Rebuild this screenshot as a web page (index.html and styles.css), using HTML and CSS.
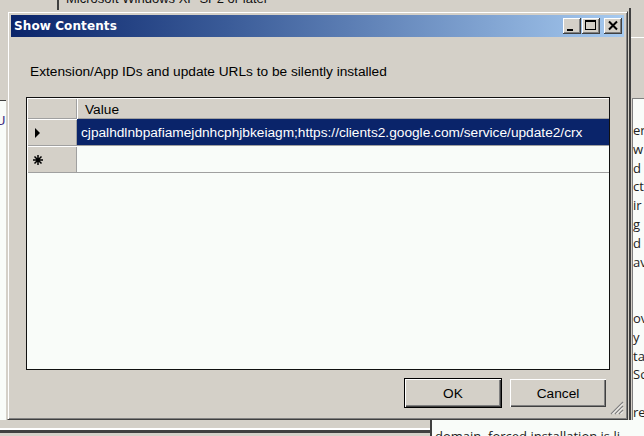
FILE: index.html
```html
<!DOCTYPE html>
<html>
<head>
<meta charset="utf-8">
<link rel="stylesheet" href="styles.css">
</head>
<body>
<div class="desktop">
  <div class="bg-top">
    <span class="bg-top-line"></span>
    <span class="bg-top-text">Microsoft Windows XP SP2 or later</span>
  </div>
  <div class="bg-left"><span class="bg-left-text">U</span></div>
  <div class="bg-right">
    <div class="bg-right-panel">
      <div class="ln">er</div>
      <div class="ln">w</div>
      <div class="ln">d</div>
      <div class="ln">ct</div>
      <div class="ln">ir</div>
      <div class="ln">g</div>
      <div class="ln">d</div>
      <div class="ln">av</div>
      <div class="ln"></div>
      <div class="ln"></div>
      <div class="ln">ov</div>
      <div class="ln">y</div>
      <div class="ln">ta</div>
      <div class="ln">Sc</div>
      <div class="ln"></div>
      <div class="ln">re</div>
    </div>
  </div>
  <div class="bg-bottom">
    <div class="bg-bottom-bar"></div>
    <div class="bg-bottom-panel">domain, forced installation is li</div>
  </div>

  <div class="dialog">
    <div class="titlebar">
      <span class="title">Show Contents</span>
      <div class="caption-btns">
        <span class="cap-btn"><svg width="18" height="16" viewBox="0 0 18 16"><rect x="4" y="11" width="6" height="2" fill="#000"/></svg></span>
        <span class="cap-btn"><svg width="18" height="16" viewBox="0 0 18 16"><rect x="3.5" y="2.5" width="10" height="9" fill="none" stroke="#000" stroke-width="1"/><rect x="3" y="2" width="11" height="2" fill="#000"/></svg></span>
        <span class="cap-btn cap-close"><svg width="18" height="16" viewBox="0 0 18 16"><path d="M5 3.5 L13 11.5 M13 3.5 L5 11.5" stroke="#000" stroke-width="2" fill="none"/></svg></span>
      </div>
    </div>
    <div class="body">
      <p class="label">Extension/App IDs and update URLs to be silently installed</p>
      <div class="grid">
        <div class="grid-row row-header">
          <div class="rowhead"></div>
          <div class="cell">Value</div>
        </div>
        <div class="grid-row row-selected">
          <div class="rowhead"><svg width="10" height="12" viewBox="0 0 10 12"><path d="M3 1 L8 6 L3 11 Z" fill="#000"/></svg></div>
          <div class="cell">cjpalhdlnbpafiamejdnhcphjbkeiagm;https://clients2.google.com/service/update2/crx</div>
        </div>
        <div class="grid-row row-new">
          <div class="rowhead"><svg width="12" height="12" viewBox="0 0 12 12"><path d="M6 1 V11 M1 6 H11 M2.5 2.5 L9.5 9.5 M9.5 2.5 L2.5 9.5" stroke="#000" stroke-width="1.5" fill="none"/></svg></div>
          <div class="cell"></div>
        </div>
      </div>
      <div class="buttons">
        <span class="btn btn-default"><span class="btn-face">OK</span></span>
        <span class="btn"><span class="btn-face">Cancel</span></span>
      </div>
    </div>
    <svg class="grip" width="14" height="14" viewBox="0 0 14 14">
      <path d="M13 1 L1 13 M13 5 L5 13 M13 9 L9 13" stroke="#808080" stroke-width="1.2" fill="none"/>
      <path d="M13 2.5 L2.5 13 M13 6.5 L6.5 13 M13 10.5 L10.5 13" stroke="#fff" stroke-width="1" fill="none"/>
    </svg>
  </div>
</div>
</body>
</html>
```

FILE: styles.css
```css
* { box-sizing: border-box; }
html, body { margin: 0; padding: 0; }
body {
  width: 644px;
  height: 436px;
  overflow: hidden;
  background: #d4d0c8;
  font-family: "Liberation Sans", Arial, sans-serif;
  font-size: 13.7px;
  color: #000;
}
.desktop {
  position: relative;
  width: 644px;
  height: 436px;
  overflow: hidden;
}

/* background window pieces */
.bg-top {
  position: absolute;
  left: 0;
  top: 0;
  width: 644px;
  height: 11px;
  overflow: hidden;
}
.bg-top-line {
  position: absolute;
  left: 57px;
  top: 0;
  width: 2px;
  height: 10px;
  background: #404040;
}
.bg-top-text {
  position: absolute;
  left: 66px;
  top: -9px;
  font-size: 13px;
  color: #111;
}
.bg-left {
  position: absolute;
  left: 0;
  top: 100px;
  width: 6px;
  height: 320px;
  background: #f9fcf9;
  border-top: 1px solid #404040;
  overflow: hidden;
}
.bg-left-text {
  position: absolute;
  left: -4px;
  top: 12px;
  font-size: 13px;
  color: #3a2a80;
}
.bg-right {
  position: absolute;
  left: 629px;
  top: 8px;
  width: 15px;
  height: 428px;
  border-left: 2px solid #404040;
  background: #d4d0c8;
  overflow: hidden;
}
.bg-right::before {
  content: "";
  display: block;
  height: 1px;
  margin-top: 29px;
  background: #fff;
}
.bg-right-panel {
  margin-top: 60px;
  margin-left: 1px;
  height: 400px;
  background: #f9fcf9;
  border-top: 1px solid #808080;
  border-left: 1px solid #808080;
  padding-top: 22px;
  font-family: "Open Sans", "Liberation Sans", sans-serif;
  font-size: 13px;
  color: #222;
}
.ln {
  height: 18.8px;
  line-height: 18.8px;
  white-space: nowrap;
}
.bg-bottom {
  position: absolute;
  left: 0;
  top: 420px;
  width: 644px;
  height: 16px;
  display: flex;
}
.bg-bottom-bar {
  width: 430px;
  border-bottom: 3px solid #404040;
  box-shadow: inset 0 -2px #fff;
  height: 13px;
}
.bg-bottom-panel {
  flex: 1;
  background: #f9fcf9;
  border-left: 2px solid #404040;
  padding-left: 3px;
  font-family: "Open Sans", "Liberation Sans", sans-serif;
  font-size: 13px;
  line-height: 14px;
  padding-top: 9px;
  white-space: nowrap;
  color: #222;
}

/* dialog */
.dialog {
  position: absolute;
  left: 7px;
  top: 11px;
  width: 621px;
  height: 409px;
  background: #d4d0c8;
  border: 1px solid;
  border-color: #d4d0c8 #404040 #404040 #d4d0c8;
  box-shadow: inset 1px 1px #fff, inset -1px -1px #808080;
  padding: 3px;
  display: flex;
  flex-direction: column;
}
.titlebar {
  height: 22px;
  background: linear-gradient(to right, #0a246a 0%, #3a5b98 35%, #a6caf0 100%);
  display: flex;
  align-items: center;
  justify-content: space-between;
  padding-left: 3px;
  padding-right: 2px;
}
.title {
  font-family: "DejaVu Sans", Verdana, sans-serif;
  font-weight: bold;
  font-size: 12px;
  color: #fff;
  letter-spacing: 0.1px;
}
.caption-btns {
  display: flex;
  align-items: center;
}
.cap-btn {
  width: 18px;
  height: 16px;
  background: #d4d0c8;
  box-shadow: inset -1px -1px #404040, inset 1px 1px #fff, inset -2px -2px #808080;
  display: flex;
}
.cap-btn + .cap-btn { margin-left: 1px; }
.cap-btn.cap-close { margin-left: 4px; }

.body {
  flex: 1;
  display: flex;
  flex-direction: column;
  padding: 0 14px 0 15px;
}
.label {
  margin: 27px 0 0 4px;
  line-height: 16px;
  white-space: nowrap;
}
.grid {
  margin-top: 17px;
  height: 273px;
  border: 1px solid #111;
  background: #f9fcf9;
  display: flex;
  flex-direction: column;
}
.grid-row {
  display: flex;
}
.rowhead {
  width: 50px;
  flex: none;
  background: #d4d0c8;
  box-shadow: inset 1px 1px #fff, inset -1px -1px #a0a0a0;
  display: flex;
  align-items: center;
  padding-left: 5px;
}
.cell {
  flex: 1;
  display: flex;
  align-items: center;
  white-space: nowrap;
  overflow: hidden;
}
.row-header { height: 21px; }
.row-header .cell {
  background: #d4d0c8;
  box-shadow: inset 1px 1px #fff, inset 0 -1px #a0a0a0;
  padding-left: 8px;
  padding-top: 2px;
}
.row-selected { height: 27px; }
.row-selected .cell {
  background: #0a246a;
  color: #fff;
  padding-left: 4px;
  border-bottom: 1px solid #a0a0a0;
}
.row-new { height: 27px; }
.row-new .cell {
  background: #f9fcf9;
  border-bottom: 1px solid #a0a0a0;
}

.buttons {
  margin-top: 8px;
  display: flex;
  justify-content: flex-end;
  gap: 7px;
  padding-right: 3px;
}
.btn {
  width: 98px;
  height: 30px;
  display: flex;
  background: #d4d0c8;
  border: 1px solid #d4d0c8;
}
.btn-face {
  flex: 1;
  display: flex;
  align-items: center;
  justify-content: center;
  box-shadow: inset 1px 1px #fff, inset -1px -1px #404040, inset -2px -2px #808080;
}
.btn-default { border-color: #000; }

.grip {
  position: absolute;
  right: 3px;
  bottom: 4px;
}
```
